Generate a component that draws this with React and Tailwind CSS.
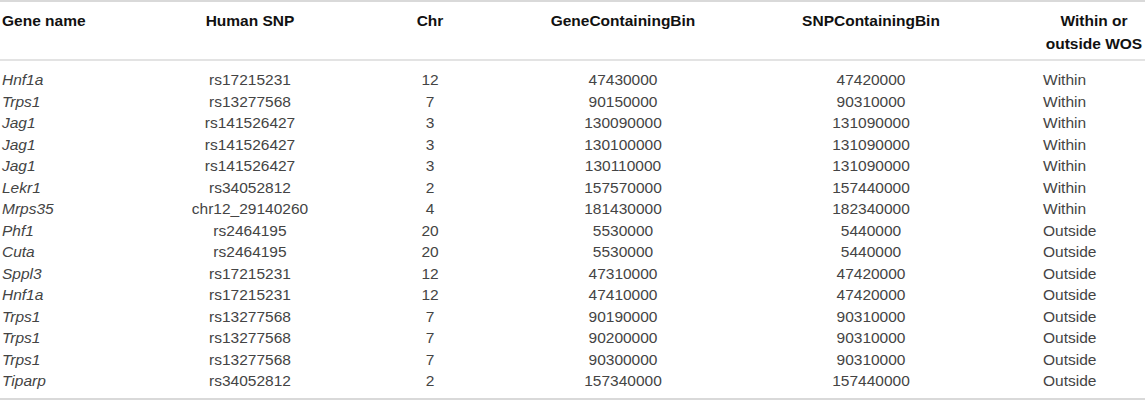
import React from "react";

const rows = [
  ["Hnf1a", "rs17215231", "12", "47430000", "47420000", "Within"],
  ["Trps1", "rs13277568", "7", "90150000", "90310000", "Within"],
  ["Jag1", "rs141526427", "3", "130090000", "131090000", "Within"],
  ["Jag1", "rs141526427", "3", "130100000", "131090000", "Within"],
  ["Jag1", "rs141526427", "3", "130110000", "131090000", "Within"],
  ["Lekr1", "rs34052812", "2", "157570000", "157440000", "Within"],
  ["Mrps35", "chr12_29140260", "4", "181430000", "182340000", "Within"],
  ["Phf1", "rs2464195", "20", "5530000", "5440000", "Outside"],
  ["Cuta", "rs2464195", "20", "5530000", "5440000", "Outside"],
  ["Sppl3", "rs17215231", "12", "47310000", "47420000", "Outside"],
  ["Hnf1a", "rs17215231", "12", "47410000", "47420000", "Outside"],
  ["Trps1", "rs13277568", "7", "90190000", "90310000", "Outside"],
  ["Trps1", "rs13277568", "7", "90200000", "90310000", "Outside"],
  ["Trps1", "rs13277568", "7", "90300000", "90310000", "Outside"],
  ["Tiparp", "rs34052812", "2", "157340000", "157440000", "Outside"],
];

const grid = "grid grid-cols-[170px_160px_200px_186px_310px_1fr]";

export default function App() {
  return (
    <div
      className="w-[1145px] h-[401px] bg-white overflow-hidden text-[15.5px]"
      style={{ fontFamily: '"Liberation Sans", Arial, sans-serif' }}
    >
      <div className="border-t-2 border-b-2 border-[#d9d9d9]">
        <div className={`${grid} pt-[7px] pb-[4px] border-b-2 border-[#e3e3e3] font-bold text-[#111] leading-[23px]`}>
          <div className="pl-[2px]">Gene name</div>
          <div className="text-center">Human SNP</div>
          <div className="text-center">Chr</div>
          <div className="text-center">GeneContainingBin</div>
          <div className="text-center">SNPContainingBin</div>
          <div className="pl-[17px] text-center">
            Within or
            <br />
            outside WOS
          </div>
        </div>
        <div className="pt-[8px] pb-[6px] text-[#444] leading-[21.5px]">
          {rows.map((r, i) => (
            <div key={i} className={grid}>
              <div className="pl-[2px] italic">{r[0]}</div>
              <div className="text-center">{r[1]}</div>
              <div className="text-center">{r[2]}</div>
              <div className="text-center">{r[3]}</div>
              <div className="text-center">{r[4]}</div>
              <div className="pl-[17px]">{r[5]}</div>
            </div>
          ))}
        </div>
      </div>
    </div>
  );
}
